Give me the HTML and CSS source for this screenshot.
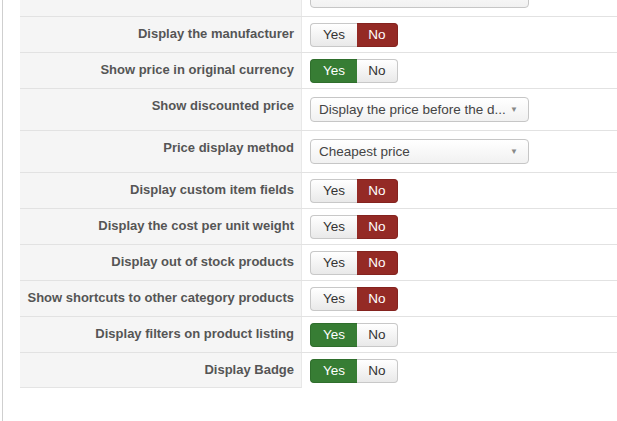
FILE: index.html
```html
<!DOCTYPE html>
<html lang="en">
<head>
  <meta charset="UTF-8" />
  <title>Product listing options</title>
  <link rel="stylesheet" href="styles.css">
</head>
<body>

<div class="panel">
  <div class="options">

    <!-- previous option, scrolled mostly out of view -->
    <div class="row row-select">
      <div class="label"></div>
      <div class="control">
        <div class="select"></div>
      </div>
    </div>

    <div class="row">
      <div class="label">Display the manufacturer</div>
      <div class="control">
        <div class="toggle"><span class="yes">Yes</span><span class="no on-no">No</span></div>
      </div>
    </div>

    <div class="row">
      <div class="label">Show price in original currency</div>
      <div class="control">
        <div class="toggle"><span class="yes on-yes">Yes</span><span class="no">No</span></div>
      </div>
    </div>

    <div class="row row-select">
      <div class="label">Show discounted price</div>
      <div class="control">
        <div class="select"><span>Display the price before the d...</span><span class="caret">▼</span></div>
      </div>
    </div>

    <div class="row row-select">
      <div class="label">Price display method</div>
      <div class="control">
        <div class="select"><span>Cheapest price</span><span class="caret">▼</span></div>
      </div>
    </div>

    <div class="row">
      <div class="label">Display custom item fields</div>
      <div class="control">
        <div class="toggle"><span class="yes">Yes</span><span class="no on-no">No</span></div>
      </div>
    </div>

    <div class="row">
      <div class="label">Display the cost per unit weight</div>
      <div class="control">
        <div class="toggle"><span class="yes">Yes</span><span class="no on-no">No</span></div>
      </div>
    </div>

    <div class="row">
      <div class="label">Display out of stock products</div>
      <div class="control">
        <div class="toggle"><span class="yes">Yes</span><span class="no on-no">No</span></div>
      </div>
    </div>

    <div class="row">
      <div class="label">Show shortcuts to other category products</div>
      <div class="control">
        <div class="toggle"><span class="yes">Yes</span><span class="no on-no">No</span></div>
      </div>
    </div>

    <div class="row">
      <div class="label">Display filters on product listing</div>
      <div class="control">
        <div class="toggle"><span class="yes on-yes">Yes</span><span class="no">No</span></div>
      </div>
    </div>

    <div class="row last">
      <div class="label">Display Badge</div>
      <div class="control">
        <div class="toggle"><span class="yes on-yes">Yes</span><span class="no">No</span></div>
      </div>
    </div>

  </div>
</div>

</body>
</html>
```

FILE: styles.css
```css
* {
  box-sizing: border-box;
  font-family: "Liberation Sans", Arial, sans-serif;
}

html, body {
  margin: 0;
  height: 100%;
  overflow: hidden;
  background: #fff;
}

.panel {
  display: flow-root;
  margin-left: 2px;
  height: 100%;
  border-left: 1px solid #cfcfcf;
  padding-left: 17px;
}

.options {
  margin-top: -26px;
}

.row {
  display: grid;
  grid-template-columns: 282px 1fr;
  border-top: 1px solid #e2e2e2;
}

.label {
  background: #f5f5f5;
  border-right: 1px solid #e8e8e8;
  text-align: right;
  padding: 8px 7px 0 0;
  font-size: 13px;
  line-height: 18px;
  font-weight: bold;
  color: #555;
  white-space: nowrap;
}

.row.last .label {
  border-bottom: 1px solid #e4e4e4;
}

.control {
  padding: 6px 8px 5px;
}

.row-select .control {
  padding: 8px 8px 8px;
}

/* yes / no switch */
.toggle {
  display: flex;
  width: 88px;
  height: 24px;
  font-size: 13.5px;
  line-height: 22px;
}

.toggle span {
  text-align: center;
  color: #333;
  background: linear-gradient(#ffffff, #e9e9e9);
  border: 1px solid #c8c8c8;
}

.toggle .yes {
  width: 47px;
  border-radius: 4px 0 0 4px;
  border-right: none;
}

.toggle .no {
  width: 41px;
  border-radius: 0 4px 4px 0;
  border-left: none;
}

.toggle .on-yes {
  background: #377d34;
  border-color: #2f6e2c;
  color: #fff;
}

.toggle .on-no {
  background: #942a25;
  border-color: #84231f;
  color: #fff;
}

/* dropdown */
.select {
  display: flex;
  justify-content: space-between;
  align-items: center;
  width: 219px;
  height: 25px;
  padding: 0 10px 0 8px;
  border: 1px solid #c6c6c6;
  border-radius: 4px;
  background: linear-gradient(#ffffff, #f1f1f1);
  font-size: 13.5px;
  color: #444;
}

.select .caret {
  font-size: 8px;
  color: #888;
}
```
